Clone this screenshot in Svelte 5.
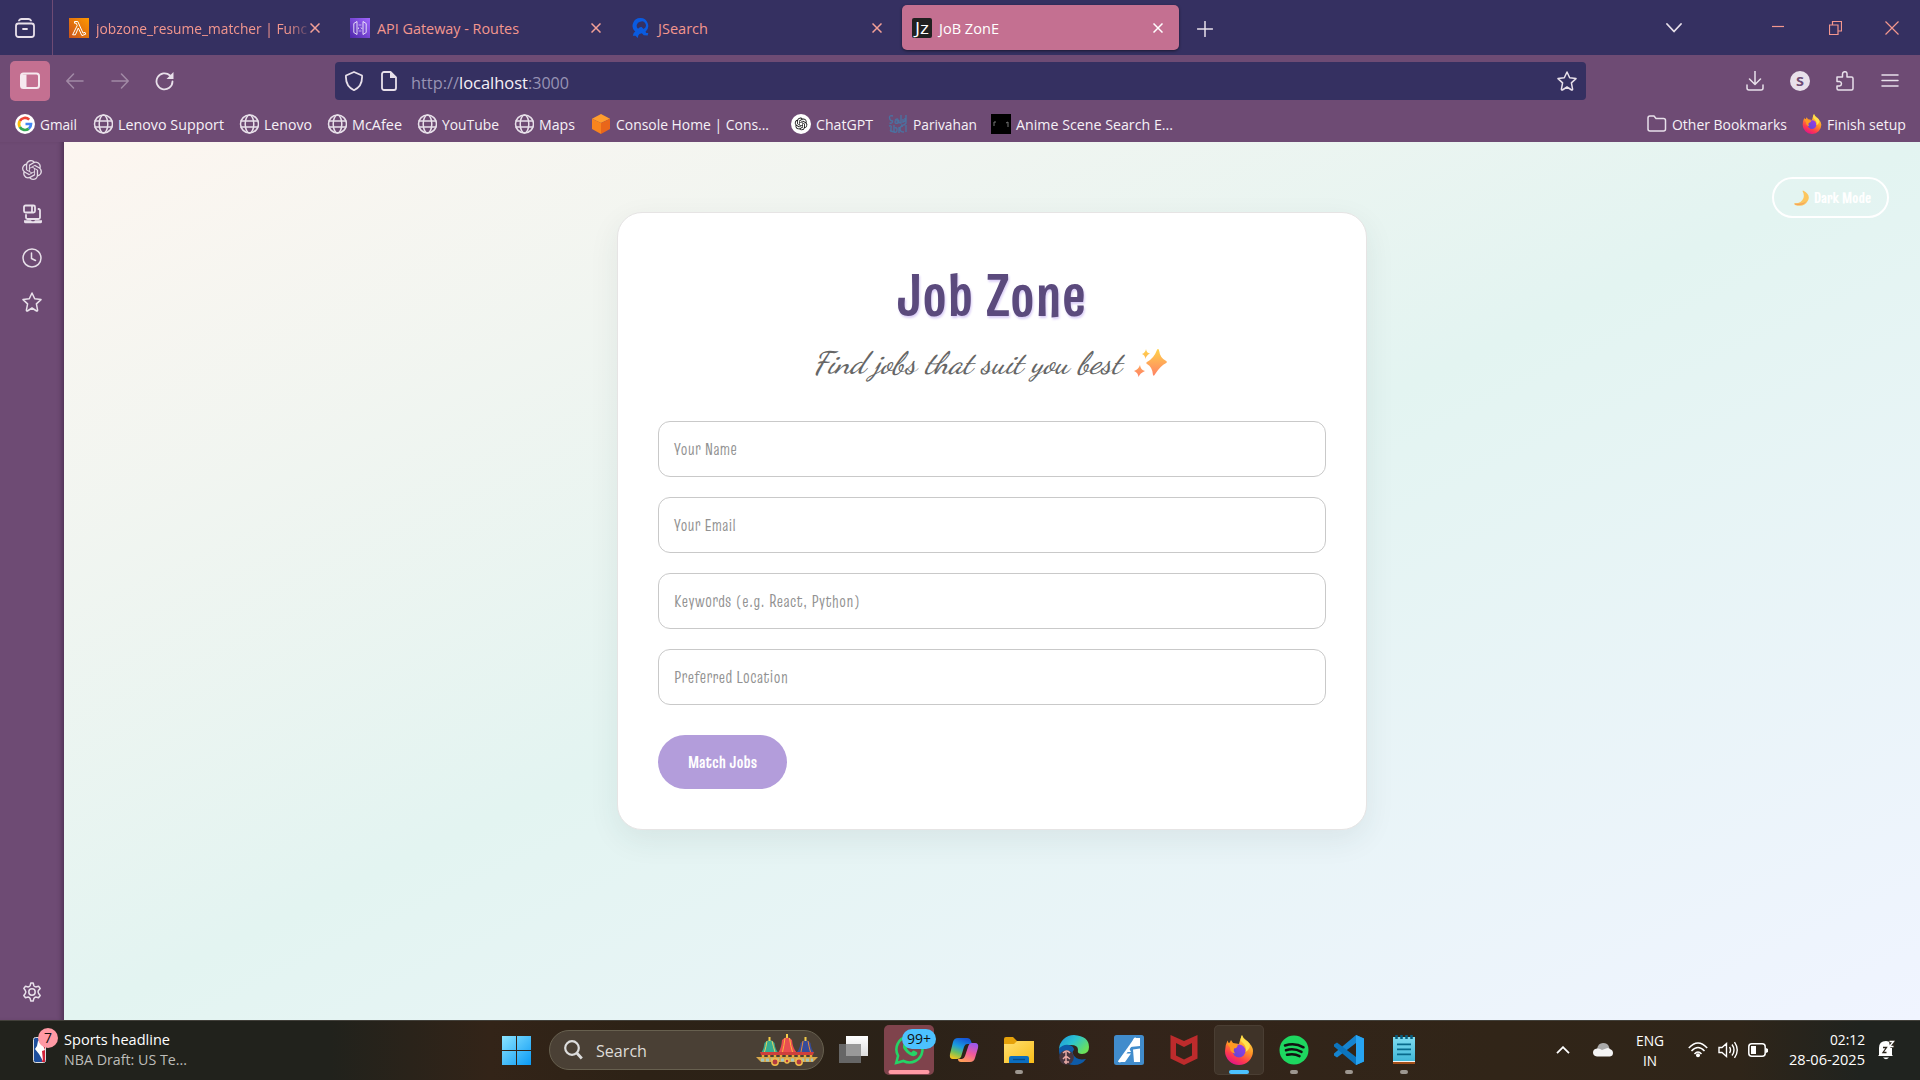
<script>
  const tabs = [
    { icon: 'lambda', title: 'jobzone_resume_matcher | Func', w: 211, fade: true },
    { icon: 'gateway', title: 'API Gateway - Routes', w: 142 },
    { icon: 'jsearch', title: 'JSearch', w: 50 },
    { icon: 'jz', title: 'JoB ZonE', w: 60, active: true },
  ];
  const bookmarks = [
    { icon: 'google', title: 'Gmail', w: 37, box: 37 },
    { icon: 'globe', title: 'Lenovo Support', w: 106, box: 105 },
    { icon: 'globe', title: 'Lenovo', w: 48, box: 47 },
    { icon: 'globe', title: 'McAfee', w: 50, box: 49 },
    { icon: 'globe', title: 'YouTube', w: 57, box: 56 },
    { icon: 'globe', title: 'Maps', w: 36, box: 36 },
    { icon: 'cube', title: 'Console Home | Cons...', w: 153, box: 159 },
    { icon: 'chatgpt', title: 'ChatGPT', w: 57, box: 56 },
    { icon: 'parivahan', title: 'Parivahan', w: 64, box: 62 },
    { icon: 'anime', title: 'Anime Scene Search E...', w: 157, box: 156 },
  ];
  const fields = [
    { label: 'Your Name', w: 63 },
    { label: 'Your Email', w: 62 },
    { label: 'Keywords (e.g. React, Python)', w: 186 },
    { label: 'Preferred Location', w: 114 },
  ];
  const apps = [
    { icon: 'taskview' },
    { icon: 'whatsapp', state: 'alert', badge: '99+' },
    { icon: 'copilot' },
    { icon: 'explorer', state: 'running' },
    { icon: 'edge' },
    { icon: 'appA' },
    { icon: 'mcafee' },
    { icon: 'firefox', state: 'focused' },
    { icon: 'spotify', state: 'running' },
    { icon: 'vscode', state: 'running' },
    { icon: 'notepad', state: 'running' },
  ];
  const knot = 'M22.2819 9.8211a5.9847 5.9847 0 0 0-.5157-4.9108 6.0462 6.0462 0 0 0-6.5098-2.9A6.0651 6.0651 0 0 0 4.9807 4.1818a5.9847 5.9847 0 0 0-3.9977 2.9 6.0462 6.0462 0 0 0 .7427 7.0966 5.98 5.98 0 0 0 .511 4.9107 6.051 6.051 0 0 0 6.5146 2.9001A5.9847 5.9847 0 0 0 13.2599 24a6.0557 6.0557 0 0 0 5.7718-4.2058 5.9894 5.9894 0 0 0 3.9977-2.9001 6.0557 6.0557 0 0 0-.7475-7.0729zm-9.022 12.6081a4.4755 4.4755 0 0 1-2.8764-1.0408l.1419-.0804 4.7783-2.7582a.7948.7948 0 0 0 .3927-.6813v-6.7369l2.02 1.1686a.071.071 0 0 1 .038.052v5.5826a4.504 4.504 0 0 1-4.4945 4.4944zm-9.6607-4.1254a4.4708 4.4708 0 0 1-.5346-3.0137l.142.0852 4.783 2.7582a.7712.7712 0 0 0 .7806 0l5.8428-3.3685v2.3324a.0804.0804 0 0 1-.0332.0615L9.74 19.9502a4.4992 4.4992 0 0 1-6.1408-1.6464zM2.3408 7.8956a4.485 4.485 0 0 1 2.3655-1.9728V11.6a.7664.7664 0 0 0 .3879.6765l5.8144 3.3543-2.0201 1.1685a.0757.0757 0 0 1-.071 0l-4.8303-2.7865A4.504 4.504 0 0 1 2.3408 7.8956zm16.5963 3.8558L13.1038 8.364 15.1192 7.2a.0757.0757 0 0 1 .071 0l4.8303 2.7913a4.4944 4.4944 0 0 1-.6765 8.1042v-5.6772a.79.79 0 0 0-.407-.667zm2.0107-3.0231l-.142-.0852-4.7735-2.7818a.7759.7759 0 0 0-.7854 0L9.409 9.2297V6.8974a.0662.0662 0 0 1 .0284-.0615l4.8303-2.7866a4.4992 4.4992 0 0 1 6.6802 4.66zM8.3065 12.863l-2.02-1.1638a.0804.0804 0 0 1-.038-.0567V6.0742a4.4992 4.4992 0 0 1 7.3757-3.4537l-.142.0805L8.704 5.459a.7948.7948 0 0 0-.3927.6813zm1.0976-2.3654l2.602-1.4998 2.6069 1.4998v2.9994l-2.5974 1.4997-2.6067-1.4997Z';
</script>

<!-- A line of text fitted to the width w; the box keeps its own width. -->
{#snippet label(text, w, cls = '', box = w)}
  <svg class="label {cls}" width={box} height="20"><text x="0" y="16" textLength={w} lengthAdjust="spacingAndGlyphs">{text}</text></svg>
{/snippet}

{#snippet icon(name, size = 20)}
  <svg class="icon" width={size} height={size} viewBox={size === 30 ? '0 0 30 30' : '0 0 20 20'}>
    {#if name === 'lambda'}
      <rect width="20" height="20" fill="url(#gOrange)" />
      <path d="M5.5 3.5h3.3l5.2 11.6 2-.8.7 1.9-3.8 1.4L9.3 10 6.4 16.8H3.6L8.2 7.6 7.2 5.2H5.5z" fill="none" stroke="#fff" stroke-width="1" />
    {:else if name === 'gateway'}
      <rect width="20" height="20" fill="url(#gPurple)" />
      <g fill="none" stroke="#fff" stroke-width=".8"><path d="M7 3.5v13L3.8 14.500v-9zM13 3.500v13l3.200-2v-9z" /><path d="M9.200 6.500v1M10.800 6.500v1M9 9.500l-.8.800.8.800M11 9.500l.8.800-.8.800M9.200 12.500v1M10.800 12.500v1" /></g>
    {:else if name === 'jsearch'}
      <path fill-rule="evenodd" fill="#0a5be0" d="M9.5 0a7.8 7.8 0 0 1 5 13.7l.8 1.3 2 .1-.6 2.4-4-.2-1.8-2.1q-3 .5-3.6 2.3l-.5 2.5-2.3-2.2H1.8l1-3.1 1.5-1A7.8 7.8 0 0 1 9.500 0M9 3.800a4 4 0 0 0-2 6.900q2-2.300 3.600-1.700l2 2A4 4 0 0 0 9 3.800" />
    {:else if name === 'jz'}
      <rect width="20" height="20" rx="2" fill="#202020" />
      <text x="3" y="15.500" class="jz" textLength="14" lengthAdjust="spacingAndGlyphs">Jz</text>
    {:else if name === 'google'}
      <circle cx="10" cy="10" r="10" fill="#fff" />
      <g fill="none" stroke-width="2.700"><path d="M14.200 5.600A6 6 0 0 0 4.800 7" stroke="#ea4335" /><path d="M4.800 7a6 6 0 0 0 0 6" stroke="#fbbc05" /><path d="M4.800 13a6 6 0 0 0 9 1.600" stroke="#34a853" /><path d="M13.800 14.600A6 6 0 0 0 16 10h-5.500" stroke="#4285f4" /></g>
    {:else if name === 'globe'}
      <g class="line"><circle cx="10.500" cy="10" r="9" /><ellipse cx="10.500" cy="10" rx="4.300" ry="9" /><path d="M2 7h17M2 13h17" /></g>
    {:else if name === 'cube'}
      <path d="M10 0l9 4.800L10 9 1 4.800z" fill="#ff9d2e" /><path d="M1 4.800L10 9v11l-9-5z" fill="#f8841e" /><path d="M19 4.800L10 9v11l9-5z" fill="#e9661a" />
    {:else if name === 'chatgpt'}
      <circle cx="10" cy="10" r="10" fill="#fff" /><g transform="translate(3.700 3.600) scale(.53)"><path d={knot} fill="#111" /></g>
    {:else if name === 'knot'}
      <g transform="scale(.833)"><path d={knot} fill="#e4dbe6" /></g>
    {:else if name === 'parivahan'}
      <path d="M5 2Q1 1 1.500 4t3 3q0 3-3 2M7 6q3-2 3 0v3q-3 1-3-1t3-1M13 1v8q-3 0-2-3M15 5v3l2-1V4M18 1v8q-2 3-5 2M1 12q3-1 2 2v4M6 11v7q3 1 3-2t-2-2M11 13v6M15 12q-3 0-3 3t4 3M18 11v7M2 16q2 2 5 2" fill="none" stroke="#4b71a0" stroke-width="1.400" />
    {:else if name === 'anime'}
      <rect width="20" height="20" fill="#000" /><path d="M3 12V8h2M15 9l2-1v5" stroke="#777" fill="none" />
    {:else if name === 'folder'}
      <path class="line" d="M3 2h4l2 2.500h7.500a2 2 0 0 1 2 2V15a2 2 0 0 1-2 2H3a2 2 0 0 1-2-2V4a2 2 0 0 1 2-2z" />
    {:else if name === 'firefox'}
      <g transform={size === 30 ? '' : 'scale(.667)'}>
        <path d="M18 0q1 3 4 5 2 1 3.500 3.500Q29 12 29 16a14 14 0 0 1-28 0Q1 10 3.500 5.500L5 9l2-4 2 3 6 1Q16 4 18 0z" fill="url(#gFox)" />
        <circle cx="15" cy="16" r="6.500" fill="url(#gFoxCore)" />
        <path d="M3 8q4-1 7 1l4 1.500q-1 2.500-4 3-1 3 1 5-5-1-5-6-2-2-3-4.500z" fill="#ff9a22" />
        <path d="M18 0q-3 5 1 8 4 4 2.500 9Q27 14 25.500 8.500q-2-2-4-3Q18 3 18 0z" fill="#ffe14d" />
      </g>
    {:else if name === 'view'}
      <g class="line thick"><path d="M4 2.500Q5 1 6.500 1h7Q15 1 16 2.500" /><rect x="1" y="5.500" width="18" height="13.500" rx="2.500" /><path d="M8 11h4" /></g>
    {:else if name === 'sidebar'}
      <rect x="1" y="2.500" width="18" height="14.500" rx="2.500" fill="none" stroke="#f6e9ef" stroke-width="2" /><path d="M2 3.500h4.500v12.500H2z" fill="#f6e9ef" />
    {:else if name === 'back'}
      <path class="line" d="M18 10H2M8.500 3L1.800 10l6.700 7" />
    {:else if name === 'forward'}
      <path class="line" d="M2 10h16M11.500 3l6.700 7-6.700 7" />
    {:else if name === 'reload'}
      <path class="line thick" d="M17.500 10.500A8 8 0 1 1 15 4.500" /><path d="M18.500 1v7h-7z" fill="#e8e0ea" />
    {:else if name === 'shield'}
      <path class="line thick" d="M10 1l8 3.500q.8 10.500-8 14.700Q1.200 15 2 4.500z" />
    {:else if name === 'page'}
      <path class="line thick" d="M5 1h6.500L17 6.500V17a2 2 0 0 1-2 2H5a2 2 0 0 1-2-2V3a2 2 0 0 1 2-2z" /><path d="M11 1v6h6z" fill="#e8e0ea" />
    {:else if name === 'star'}
      <path class="line" d="M10 1l2.700 5.800 6.300.8-4.600 4.300 1.200 6.300q0 1-1 .8L10 16l-4.600 3q-1 .2-1-.8l1.200-6.300L1 7.600l6.300-.8z" />
    {:else if name === 'download'}
      <path class="line" d="M10 0v13M4.500 8l5.500 5.500L15.500 8M2 14v3q0 2 2 2h12q2 0 2-2v-3" />
    {:else if name === 'account'}
      <circle cx="10" cy="10" r="10" fill="#e8e0ea" /><text x="6" y="14.800" class="initial" textLength="8" lengthAdjust="spacingAndGlyphs">S</text>
    {:else if name === 'puzzle'}
      <path class="line" d="M2 6h5.500V3q0-2.300 2.300-2.300T12 3v3h4.500q1.500 0 1.500 1.500v10q0 1.500-1.500 1.500h-13Q2 19 2 17.500V15h2.500q2-.3 2-2.200T4.500 10.500H2z" />
    {:else if name === 'menu'}
      <path class="line" d="M2 4h16M2 9.500h16M2 15h16" />
    {:else if name === 'devices'}
      <g class="line thick"><rect x="2" y="1.500" width="11" height="7" rx="1.500" /><path d="M10 2v6M4 11v2.500q0 1.500 1.500 1.500h11q1.500 0 1.500-1.500V6.500Q18 5 16.500 5" /></g><path d="M2 16.300h7l.8 1h2.400l.8-1h7v1.500q0 1.500-1.500 1.500h-15Q2 19.300 2 17.800z" fill="#e8e0ea" />
    {:else if name === 'clock'}
      <g class="line"><circle cx="10" cy="10" r="9" /><path d="M9.500 5v5.500l4 2" /></g>
    {:else if name === 'gear'}
      <g class="line"><circle cx="10" cy="10" r="3.200" /><path d="M8.200 3.500L8.800 1h2.400l.6 2.500q.3.800 1.200 1.100l.8.300 2.700-.7 1.700 2.200-1.600 1.900q-.6.800-.5 1.700t.7 1.800l1.400 1.700-1.700 2.300-2.700-.7q-1.500.3-2 1.500L11.200 19H8.800l-.6-2.400q-.5-1.200-2-1.500l-2.700.7-1.700-2.300 1.400-1.700q1.200-1.800 0-3.500L1.800 6.400l1.700-2.200 2.700.7q1.500-.3 2-1.400z" /></g>
    {:else if name === 'taskview'}
      <path d="M0 9h22v19H0z" fill="#666" /><path d="M7 1h22v20H7z" fill="url(#gWhite)" /><path d="M7 9h15v12H7z" fill="#999" />
    {:else if name === 'whatsapp'}
      <path d="M2.200 28l1.900-7.200A13 13 0 1 1 9.500 26z" fill="none" stroke="#25d366" stroke-width="2.600" /><path d="M10 8q2-1.500 3 .8l1 2.500q0 1-1.200 2 1.500 2.800 4.500 4.200l1.600-1.800q.6-.5 1.500 0l2.700 1.500q.8.600-.4 2.600-3 3-8-.5-5-3.800-5.700-7Q8.700 9.500 10 8z" fill="#25d366" />
    {:else if name === 'copilot'}
      <path d="M9 3h9q3 0 4 3l1 3h-5q-2 0-3 3l-3 10q-1 2-4 2H4q-4 0-3-5L4 7q1-4 5-4z" fill="url(#gCopA)" /><path d="M21 27h-9q-3 0-3-3h4q2 0 3-3l3-9q1-4 4-4h3q4 0 3 5l-3 10q-1 4-5 4z" fill="url(#gCopB)" />
    {:else if name === 'explorer'}
      <path d="M0 4q0-2 2-2h7l4 4v7H0z" fill="#e5a10a" /><path d="M0 9h10l3-3h17v22H0z" fill="url(#gFolder)" /><path d="M5 28v-5q0-2 2-2h16q2 0 2 2v5z" fill="#0b6ec0" /><path d="M9 24.500h12" stroke="#064b88" stroke-width="1.300" />
    {:else if name === 'edge'}
      <path d="M0 14A15 15 0 0 1 15 0q15 1 15 12 0 7-7 7-5 0-4-4 0-5-7-5Q4 10 0 14z" fill="url(#gEdge)" /><path d="M0 14q4-5 10-4 5 1 5 5-2 1-1 4 3 7 13 5-4 6-12 6A15 15 0 0 1 0 14z" fill="#0e5ba8" /><circle cx="7.500" cy="22.500" r="7.300" fill="#493640" /><path d="M4 18q4-4 7 0M4 24l3-3 4 3M5 27h5M7 16v13" stroke="#e9aaa5" stroke-width="1.500" fill="none" />
    {:else if name === 'appA'}
      <rect width="30" height="30" rx="2.500" fill="#418ccc" /><path d="M20 3h6v8l-10 1zM12.500 16l3-2 1.500 3h-5zM10 18.500h7l-6 8.500H4zM19 14.500l7-1V27h-6z" fill="#fff" /><path d="M5 27L22 3" stroke="#fff" stroke-width="2.500" />
    {:else if name === 'mcafee'}
      <path d="M1.500 0L15 6 28.500 0v23.500L15 30 1.500 23.500zM7 8v12.500l8 4 8-4V8l-8 4z" fill="#bd2b2c" fill-rule="evenodd" />
    {:else if name === 'spotify'}
      <circle cx="15" cy="15" r="14.500" fill="#1ed760" /><path d="M6 10.500q10-3 18.500 1.800M7 15.300q8-2.500 15.500 1.600M8 19.800q7-1.800 12.500 1.300" fill="none" stroke="#111" stroke-width="2.500" stroke-linecap="round" />
    {:else if name === 'vscode'}
      <path d="M22 0l8 3.500v23L22 30V8L3 22.500 0 20.500v-2L22 0z" fill="#1684cf" /><path d="M0 9.500L3 7.500 22 22v8L0 11.500z" fill="#0c74bd" /><path d="M22 0l8 3.500v23L22 30z" fill="#27a4f2" />
    {:else if name === 'notepad'}
      <path d="M4 2h22v27H4z" fill="#a3501a" /><path d="M4 2h22v25H4z" fill="#f3f3f3" /><path d="M4 2h22v24H4z" fill="url(#gNote)" /><path d="M8 9.300h14M8 14.300h14M8 19.300h14" stroke="#086a8b" stroke-width="1.700" /><path d="M7.500 0v4M12.500 0v4M17.500 0v4M22.500 0v4" stroke="#075f80" stroke-width="2.500" />
    {/if}
  </svg>
{/snippet}

{#snippet cross()}
  <svg class="cross" width="10" height="10" viewBox="0 0 10 10"><path d="M.5.5l9 9M9.500.5l-9 9" /></svg>
{/snippet}

<svg class="defs" width="0" height="0" aria-hidden="true">
  <defs>
    <linearGradient id="gOrange" x1="0" y1="1" x2="1" y2="0"><stop stop-color="#c8511b" /><stop offset="1" stop-color="#ff9900" /></linearGradient>
    <linearGradient id="gPurple" x1="0" y1="1" x2="1" y2="0"><stop stop-color="#4d27a8" /><stop offset="1" stop-color="#a166ff" /></linearGradient>
    <linearGradient id="gFox" x1=".8" y1="0" x2=".3" y2="1"><stop stop-color="#ffe94a" /><stop offset=".45" stop-color="#ff9325" /><stop offset=".75" stop-color="#ff3b4d" /><stop offset="1" stop-color="#e0128c" /></linearGradient>
    <linearGradient id="gFoxCore" x1="1" y1="0" x2="0" y2="1"><stop stop-color="#a03ae8" /><stop offset="1" stop-color="#5a4ad0" /></linearGradient>
    <linearGradient id="gWhite" x1="0" y1="0" x2="0" y2="1"><stop stop-color="#fff" /><stop offset="1" stop-color="#ddd" /></linearGradient>
    <linearGradient id="gCopA" x1=".6" y1="0" x2=".2" y2="1"><stop stop-color="#1556d8" /><stop offset=".4" stop-color="#1a9be0" /><stop offset=".7" stop-color="#6cc060" /><stop offset="1" stop-color="#f4c41c" /></linearGradient>
    <linearGradient id="gCopB" x1=".7" y1="0" x2=".3" y2="1"><stop stop-color="#9a58ee" /><stop offset=".5" stop-color="#f0599c" /><stop offset="1" stop-color="#ff9e58" /></linearGradient>
    <linearGradient id="gFolder" x1="0" y1="0" x2="1" y2="1"><stop stop-color="#ffdf70" /><stop offset="1" stop-color="#f9bd18" /></linearGradient>
    <linearGradient id="gEdge" x1="0" y1="0" x2="1" y2=".6"><stop stop-color="#1b93dd" /><stop offset=".5" stop-color="#2cc3d0" /><stop offset="1" stop-color="#6be05a" /></linearGradient>
    <linearGradient id="gNote" x1="0" y1="0" x2="0" y2="1"><stop stop-color="#7fdcf0" /><stop offset="1" stop-color="#41b8d8" /></linearGradient>
    <linearGradient id="gWin" x1="0" y1="0" x2="29" y2="29" gradientUnits="userSpaceOnUse"><stop stop-color="#8be4ff" /><stop offset="1" stop-color="#0a9af5" /></linearGradient>
    <linearGradient id="gSpark" x1="0" y1="0" x2="0" y2="1"><stop stop-color="#ffd24a" /><stop offset="1" stop-color="#ff8365" /></linearGradient>
  </defs>
</svg>

<div class="screen">
  <header class="tabbar">
    <div class="view">{@render icon('view')}</div>
    <div class="tabs">
      {#each tabs as tab}
        <div class="tab" class:active={tab.active} class:fade={tab.fade}>
          {@render icon(tab.icon)}
          <div class="tab-title">{@render label(tab.title, tab.w)}</div>
          {@render cross()}
        </div>
      {/each}
    </div>
    <svg class="plus" width="16" height="16"><path class="line" d="M8 .5v15M.5 8h15" /></svg>
    <div class="window">
      <svg width="16" height="10"><path class="line thick" d="M1 1l7 7.500L15 1" /></svg>
      <svg class="min" width="12" height="14"><path d="M0 5.500h12" /></svg>
      <svg width="13" height="14"><path d="M.5 4h8.500v9.500H.5zM3.500 4V.5h9V10H9" /></svg>
      <svg width="14" height="14"><path d="M.5.5l13 13M13.500.5l-13 13" /></svg>
    </div>
  </header>

  <nav class="toolbar">
    <div class="side-toggle">{@render icon('sidebar')}</div>
    <div class="nav-icons">
      <span class="dim">{@render icon('back')}</span>
      <span class="dim">{@render icon('forward')}</span>
      <span>{@render icon('reload')}</span>
    </div>
    <div class="url">
      {@render icon('shield')}
      {@render icon('page')}
      <div class="address">
        {@render label('http://', 48, 'url-text faint')}{@render label('localhost', 69, 'url-text')}{@render label(':3000', 41, 'url-text faint')}
      </div>
      {@render icon('star')}
    </div>
    <div class="tools">
      {@render icon('download')}{@render icon('account')}{@render icon('puzzle')}{@render icon('menu')}
    </div>
  </nav>

  <nav class="bookmarks">
    {#each bookmarks as b}
      <div class="bookmark">{@render icon(b.icon)}{@render label(b.title, b.w, '', b.box)}</div>
    {/each}
    <div class="bookmark push">{@render icon('folder')}{@render label('Other Bookmarks', 115)}</div>
    <div class="bookmark last">{@render icon('firefox')}{@render label('Finish setup', 79)}</div>
  </nav>

  <div class="body">
    <aside>
      {@render icon('knot')}{@render icon('devices')}{@render icon('clock')}{@render icon('star')}
      <div class="gear">{@render icon('gear')}</div>
    </aside>
    <main>
      <button class="mode">
        <svg width="16" height="16"><path d="M10 .5q8 4 5 10-4 7.500-13 4.500-1.500-1-.5-1.800 7 .3 9-5.200Q11.500 4 9.500 1z" fill="#fcc65f" /><path d="M2 14.500q8 2 12-4-4 4-12 3z" fill="#f4a35e" /></svg>
        {@render label('Dark Mode', 57, 'mode-text')}
      </button>
      <form class="card">
        <h1><svg width="189" height="56"><text x="0" y="47" textLength="189" lengthAdjust="spacingAndGlyphs">Job Zone</text></svg></h1>
        <p>
          <svg class="tagline" width="308" height="40"><text x="0" y="28" textLength="308" lengthAdjust="spacingAndGlyphs">Find jobs that suit you best</text></svg>
          <svg class="spark" width="33" height="30" viewBox="0 0 33 30"><g fill="url(#gSpark)"><path d="M24 1q1 0 1.200 2 .8 7 7 10 1.300 1 0 2-6 3-11 11-1.500 3-2.200 1-.5-8-6-11-1.500-1 0-2 7-4 9.500-11Q23 1 24 1z" /><path d="M12 1q.5 4 4 4.500-4 2-4.500 5.500Q11 7 8 6q3.500-1.500 4-5zM6 17q.5 5 5 6-5 2-6.500 6Q4 24.500 0 23q4.500-1.500 6-6z" /></g></svg>
        </p>
        {#each fields as f}
          <div class="field">{@render label(f.label, f.w, 'field-text')}</div>
        {/each}
        <button class="submit" type="button">{@render label('Match Jobs', 69, 'submit-text')}</button>
      </form>
    </main>
  </div>

  <footer>
    <div class="news">
      <div class="nba">
        <svg width="13" height="26"><rect x=".5" y=".5" width="12" height="25" rx="2" fill="#1d4e9c" stroke="#ddd" /><path d="M8 1h4v24H9L8 16z" fill="#d22238" /><path d="M5 4q3-2 4 2l3 7-3 1 1 10-4-7-4-5 2-3z" fill="#fff" /></svg>
        <span class="badge count">7</span>
      </div>
      <div class="news-text">{@render label('Sports headline', 106, 'task')}{@render label('NBA Draft: US Te...', 123, 'task soft')}</div>
    </div>
    <div class="start"><svg width="29" height="29"><path d="M0 0h14v14H0zM15 0h14v14H15zM0 15h14v14H0zM15 15h14v14H15z" fill="url(#gWin)" /></svg></div>
    <div class="search">
      <svg width="19" height="20"><g fill="none" stroke="#ddd" stroke-width="2.200"><circle cx="8" cy="8" r="6.800" /><path d="M12.800 13l5 5.500" stroke-width="2.800" /></g></svg>
      {@render label('Search', 51, 'search-text')}
      <svg class="chariots" width="62" height="32" viewBox="0 0 62 32">
        <path d="M5 19Q8 15 8.500 9q5.500-6 10 0 .5 6 4 10z" fill="#36ad91" /><path d="M11 7q-1 6-2.500 11M16 7q1.500 6 3 11" stroke="#e9cf5b" stroke-width="1" fill="none" />
        <path d="M22 19q3.500-5 4-13 5-5.500 10 0 .5 8 5 13z" fill="#e94e51" /><path d="M29 4q-1 8-2.500 14M33.500 4q1 8 3 14" stroke="#ffb53a" stroke-width="1" fill="none" />
        <path d="M40 19q4-4 4.500-10 5.500-6 10 0 .5 6 4 10z" fill="#354b9b" /><path d="M47 7q-1 6-2 11M52 7q1 6 2.500 11" stroke="#e88b3a" stroke-width="1" fill="none" />
        <path d="M31 0v4M13.500 3v4M49.500 3v4" stroke="#f4cb49" stroke-width="2" />
        <path d="M4 18h54l-1 3H5z" fill="#cf3e3b" /><path d="M7 21v4M13 21v4M19 21v4M25 21v4M31 21v4M37 21v4M43 21v4M49 21v4M55 21v4" stroke="#e6a83a" stroke-width="2.500" />
        <path d="M0 23h62l-5 5H5z" fill="#d8a84b" /><path d="M5 26h52" stroke="#9fc6c0" stroke-width="3" stroke-dasharray="3 2" />
        <g fill="#b33b42" stroke="#f0b94b" stroke-width="1.500"><circle cx="19" cy="28" r="3.200" /><circle cx="43" cy="28" r="3.200" /><circle cx="31" cy="27" r="2" /></g>
      </svg>
    </div>
    <div class="apps">
      {#each apps as app}
        <div class="app {app.state ?? ''}">
          {@render icon(app.icon, 30)}
          {#if app.badge}<span class="badge wide">{app.badge}</span>{/if}
        </div>
      {/each}
    </div>
    <div class="tray">
      <svg width="14" height="8"><path d="M1 7.200l6-6 6 6" fill="none" stroke="#fff" stroke-width="1.800" /></svg>
      <svg class="cloud" width="20" height="14"><path d="M4 6Q5 0 10 0t6 4l1 4H4z" fill="#aaa" /><path d="M4 13.500Q0 13 0 9.500 0 6 4 5.500q3-.5 5 1.500l4-1.500q2-1 4 .5 3 1 3 4t-3 3.500z" fill="#f4f4f4" /></svg>
      <div class="lang">{@render label('ENG', 28, 'task')}{@render label('IN', 14, 'task')}</div>
      <svg class="wifi" width="20" height="16"><g fill="none" stroke="#fff" stroke-width="1.500"><path d="M.8 6Q10-4 19.200 6M3.500 9Q10 2 16.500 9M6.500 12Q10 8 13.500 12" /></g><circle cx="10" cy="13.200" r="2" fill="#fff" /></svg>
      <svg class="volume" width="20" height="18"><g fill="none" stroke="#fff" stroke-width="1.400"><path d="M1 6.500h3l4.500-4v13l-4.500-4H1zM11.500 6q2 3 0 6M14 3.500q4 5.500 0 11M16.500 1.200q5.500 7.800 0 15.600" /></g></svg>
      <svg class="battery" width="20" height="14"><rect x=".8" y=".8" width="16.400" height="12.400" rx="3" fill="none" stroke="#fff" stroke-width="1.500" /><path d="M3 3h5v8H3zM18 5l2 1v3l-2 1z" fill="#fff" /></svg>
      <div class="clock">{@render label('02:12', 35, 'task')}{@render label('28-06-2025', 76, 'task')}</div>
      <svg class="bell" width="18" height="20"><path d="M2 15V8q0-7 7-7 6 0 6 7v7l1 1H1zM6 17.500h6q-3 3.500-6 0z" fill="#fff" /><path d="M6 7.500h3.500l-3.500 5h3.500" fill="none" stroke="#2a241b" stroke-width="1.300" /><path d="M11.500 0h6.500v8h-4.500z" fill="#2a241b" /><path d="M12.500 1.500h4l-4 5h4" fill="none" stroke="#fff" stroke-width="1.400" /></svg>
    </div>
  </footer>
</div>

<style>
  :global(body) { margin: 0; overflow: hidden; }
  .defs { position: absolute; }
  .screen {
    width: 1920px; height: 1080px; display: flex; flex-direction: column; overflow: hidden;
    background: #6e4b74; font-family: 'Open Sans', 'Noto Sans', sans-serif;
  }
  svg { display: block; flex: none; }
  .label { overflow: visible; font-size: 15px; fill: #f6f1f7; }
  .line { fill: none; stroke: #e8e0ea; stroke-width: 1.5; stroke-linejoin: round; stroke-linecap: round; }
  .thick, .thick * { stroke-width: 1.8; }
  .jz { font-size: 16px; fill: #fff; }
  .initial { font-size: 13px; font-weight: 700; fill: #6e4b74; }

  .tabbar { height: 55px; flex: none; display: flex; align-items: center; background: #353061; }
  .view { width: 53px; height: 55px; box-sizing: border-box; border-right: 1px solid #6e4b74; padding: 18px 0 0 15px; }
  .tabs { display: flex; gap: 4px; margin-left: 6px; }
  .tab { width: 277px; height: 45px; box-sizing: border-box; padding: 0 16px 0 10px; display: flex; align-items: center; border-radius: 5px; }
  .tab-title { flex: 1; margin: 1px 3px 0 7px; }
  .fade .tab-title { -webkit-mask-image: linear-gradient(90deg, #000 91%, rgba(0, 0, 0, .2) 100%); mask-image: linear-gradient(90deg, #000 91%, rgba(0, 0, 0, .2) 100%); }
  .tab .label { fill: #f4978e; }
  .active { background: #c47091; box-shadow: 0 1px 3px rgba(0, 0, 0, .5); }
  .active .label { fill: #fff; }
  .cross { fill: none; stroke: #f4a097; stroke-width: 1.5; }
  .active .cross { stroke: #fff; }
  .plus { margin: 2px 0 0 18px; }
  .window { margin-left: auto; margin-right: 21px; display: flex; align-items: center; fill: none; stroke: #f4978e; stroke-width: 1.2; }
  .window svg:nth-child(1) { margin-right: 90px; }
  .window svg:nth-child(2) { margin-right: 45px; }
  .window svg:nth-child(3) { margin-right: 43px; }

  .toolbar { height: 51px; flex: none; display: flex; align-items: center; padding-left: 10px; }
  .side-toggle { width: 40px; height: 40px; border-radius: 5px; background: #c47091; display: grid; place-items: center; }
  .nav-icons { display: flex; gap: 25px; margin-left: 15px; }
  .dim { opacity: .42; }
  .url { width: 1251px; height: 38px; box-sizing: border-box; margin-left: 160px; padding: 0 9px 0 9px; border-radius: 4px; background: #353061; display: flex; align-items: center; }
  .url > :global(.icon:nth-child(2)) { margin-left: 15px; }
  .address { flex: 1; display: flex; margin: 4px 0 0 12px; }
  .url-text { font-size: 16.500px; }
  .faint { fill: #9893b4; }
  .tools { display: flex; gap: 25.200px; margin-left: 158.500px; }

  .bookmarks { height: 36px; flex: none; display: flex; align-items: center; gap: 16px; padding: 0 14.500px 0 15px; }
  .bookmark { display: flex; align-items: center; gap: 5px; }
  .push { margin-left: auto; }
  .last { margin-left: -1px; }

  .body { height: 878px; flex: none; display: flex; }
  aside {
    width: 64px; box-sizing: border-box; padding: 18px 0 18px; display: flex; flex-direction: column;
    align-items: center; gap: 24px; box-shadow: inset -5px 0 5px -3px rgba(40, 15, 45, .45);
  }
  .gear { margin-top: auto; }
  main {
    flex: 1; display: flex; flex-direction: column; align-items: center; position: relative;
    background: linear-gradient(to bottom right, #fdf6f0 0%, #e3f4f1 50%, #f0f4ff 100%);
  }
  button { border: 0; font: inherit; }
  .mode {
    position: absolute; top: 35px; right: 31px; width: 117px; height: 41px; box-sizing: border-box; padding: 0 0 0 19px;
    display: flex; align-items: center; gap: 5px; border: 2px solid #fff; border-radius: 21px; background: transparent;
  }
  .mode-text { margin-top: -2px; font: 800 15.500px Truculenta, Roboto, sans-serif; fill: #fff; }
  .card {
    width: 750px; height: 618px; box-sizing: border-box; margin-top: 70px; padding: 14px 40px; display: flex; flex-direction: column;
    border: 1px solid #e6e4e4; border-radius: 25px; background: #fff; box-shadow: 0 10px 30px rgba(40, 70, 70, .08);
  }
  h1 { margin: 42px auto 0; padding-right: 1px; font: 700 60px Truculenta, Roboto, sans-serif; fill: #5b4a7d; }
  h1 svg { overflow: visible; filter: drop-shadow(1px 2px 1px #d9ccf6); }
  p { margin: 20px auto 36px; padding-right: 5px; display: flex; align-items: center; gap: 13px; }
  .tagline { overflow: visible; font: italic 500 31px 'Dancing Script', 'Liberation Serif', cursive; fill: #666; }
  .spark { margin-top: -5px; }
  .field { height: 56px; box-sizing: border-box; margin-bottom: 20px; padding: 17px 15px; border: 1px solid #c9c9c9; border-radius: 12px; }
  .field-text { font: 400 17px Truculenta, Roboto, sans-serif; fill: #929292; }
  .submit { width: 129px; height: 54px; margin-top: 10px; padding: 0 0 0 30px; border-radius: 27px; background: #b39ddb; }
  .submit-text { font: 700 17px Truculenta, Roboto, sans-serif; fill: #fff; }

  footer {
    height: 60px; flex: none; display: flex; align-items: center; box-shadow: inset 0 1px #42403a;
    background: linear-gradient(90deg, #21221c 0, #21221c 330px, #332418 490px, #2d2216 640px, #2b2218 900px, #33241a 1120px, #312518 1500px, #2f2519 1740px, #20231f 1860px);
  }
  .news { width: 491px; display: flex; align-items: center; }
  .nba { position: relative; margin-left: 33px; width: 31px; }
  .badge { position: absolute; font-size: 14px; line-height: 20px; height: 20px; border-radius: 10px; text-align: center; color: #111; }
  .count { left: 5px; top: -9px; width: 20px; background: #ff99a4; }
  .wide { left: 18px; top: 4px; width: 34px; background: #4cc2ff; }
  .task { font-size: 15px; fill: #fff; }
  .soft { fill: #bdbdb9; }
  .news-text, .clock { margin-top: -3px; }
  .start { width: 50px; display: grid; place-items: center; margin-right: 8px; }
  .search {
    width: 275px; height: 40px; box-sizing: border-box; border: 1px solid #67604f; border-radius: 20px; background: #4a4035;
    display: flex; align-items: center; padding: 0 5px 0 14px; margin-right: 5px;
  }
  .search-text { margin: 1px 0 0 13px; font-size: 16.500px; fill: #dedbd7; }
  .chariots { margin-left: auto; }
  .apps { display: flex; gap: 5px; }
  .app { position: relative; width: 50px; height: 50px; display: grid; place-items: center; border-radius: 5px; }
  .app::after { position: absolute; bottom: 1px; left: 50%; height: 4px; border-radius: 2px; transform: translateX(-50%); }
  .running::after { content: ''; width: 8px; background: #9d9790; }
  .focused { background: #3f3328; box-shadow: inset 0 0 0 1px #4a3e33; }
  .focused::after { content: ''; width: 20px; background: #4cc2ff; }
  .alert { background: #7f434c; }
  .alert::after { content: ''; width: 41px; background: #ff99a4; }
  .tray { margin-left: auto; margin-right: 25px; display: flex; align-items: center; }
  .cloud { margin-left: 23px; }
  .lang { margin: -1px 0 0 23px; display: flex; flex-direction: column; align-items: center; }
  .wifi { margin-left: 24px; }
  .volume { margin-left: 10px; }
  .battery { margin-left: 10px; }
  .clock { margin-left: 21px; display: flex; flex-direction: column; align-items: flex-end; }
  .bell { margin-left: 12px; }
</style>
